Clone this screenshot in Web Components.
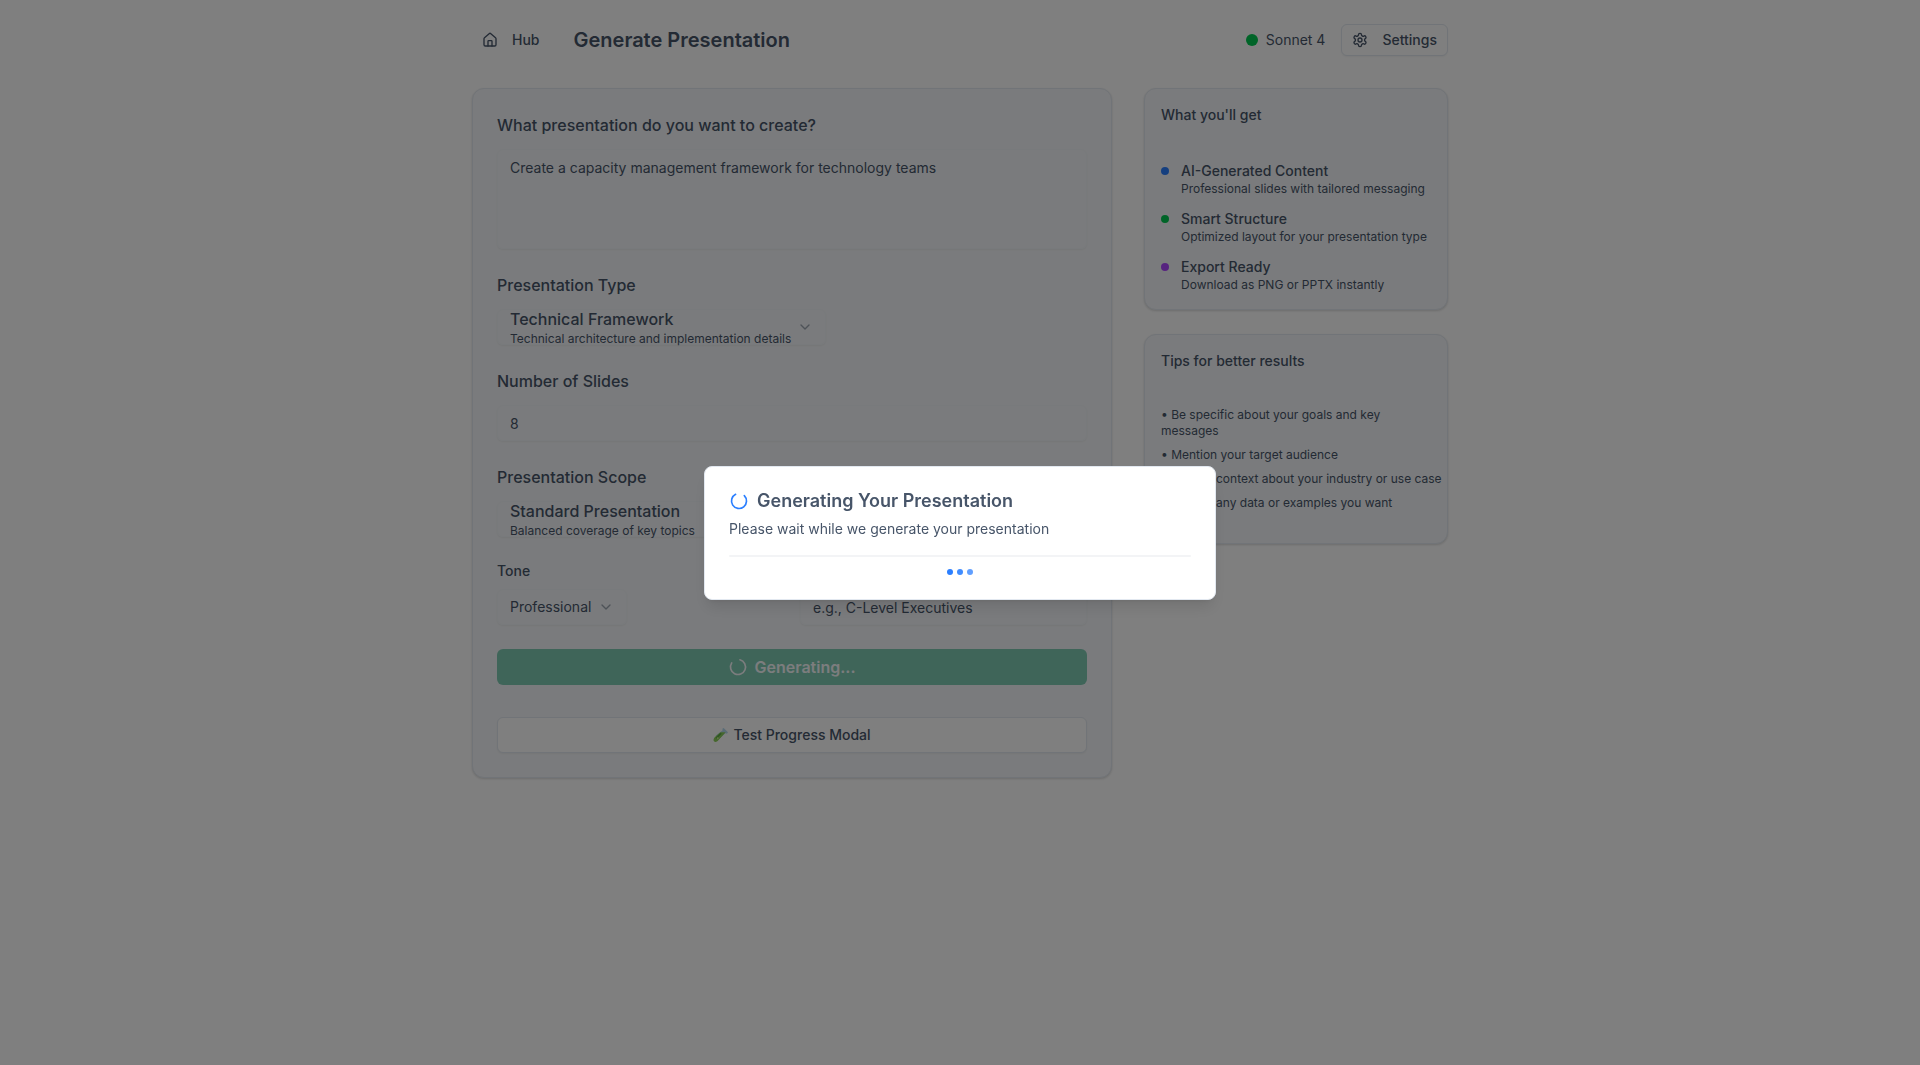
<!DOCTYPE html>
<html lang="en">
<head>
<meta charset="utf-8">
<title>Generate Presentation</title>
<style>
  html { --ink: #475569; --card: #f5f7fa; --line: #e2e8f0; }
  body { margin: 0; background: #fff; color: var(--ink); font: 14px/20px Inter, "Liberation Sans", sans-serif; }
</style>
</head>
<body>
<hub-page>
  <page-header slot="header"></page-header>
  <presentation-form slot="form"></presentation-form>
  <info-card slot="aside" heading="What you'll get">
    <feature-item color="#2b7fff" heading="AI-Generated Content">Professional slides with tailored messaging</feature-item>
    <feature-item color="#00c950" heading="Smart Structure">Optimized layout for your presentation type</feature-item>
    <feature-item color="#ad46ff" heading="Export Ready">Download as PNG or PPTX instantly</feature-item>
  </info-card>
  <info-card slot="aside" heading="Tips for better results" class="tips">
    <tip-item>Be specific about your goals and key messages</tip-item>
    <tip-item>Mention your target audience</tip-item>
    <tip-item class="line">Include context about your industry or use case</tip-item>
    <tip-item>Include any data or examples you want</tip-item>
  </info-card>
</hub-page>
<progress-modal heading="Generating Your Presentation">Please wait while we generate your presentation</progress-modal>

<script>
const ICONS = {
  home: '<path d="M3 10a2 2 0 0 1 .709-1.528l7-6a2 2 0 0 1 2.582 0l7 6A2 2 0 0 1 21 10v9a2 2 0 0 1-2 2H5a2 2 0 0 1-2-2z"/><path d="M15 21v-7a1 1 0 0 0-1-1h-4a1 1 0 0 0-1 1v7"/>',
  settings: '<path d="M12.22 2h-.44a2 2 0 0 0-2 2v.18a2 2 0 0 1-1 1.73l-.43.25a2 2 0 0 1-2 0l-.15-.08a2 2 0 0 0-2.73.73l-.22.38a2 2 0 0 0 .73 2.73l.15.1a2 2 0 0 1 1 1.72v.51a2 2 0 0 1-1 1.74l-.15.09a2 2 0 0 0-.73 2.73l.22.38a2 2 0 0 0 2.73.73l.15-.08a2 2 0 0 1 2 0l.43.25a2 2 0 0 1 1 1.73V20a2 2 0 0 0 2 2h.44a2 2 0 0 0 2-2v-.18a2 2 0 0 1 1-1.73l.43-.25a2 2 0 0 1 2 0l.15.08a2 2 0 0 0 2.73-.73l.22-.39a2 2 0 0 0-.73-2.73l-.15-.08a2 2 0 0 1-1-1.74v-.5a2 2 0 0 1 1-1.74l.15-.09a2 2 0 0 0 .73-2.73l-.22-.38a2 2 0 0 0-2.73-.73l-.15.08a2 2 0 0 1-2 0l-.43-.25a2 2 0 0 1-1-1.73V4a2 2 0 0 0-2-2z"/><circle cx="12" cy="12" r="3"/>',
  chevron: '<path d="m6 9 6 6 6-6"/>',
  loader: '<path transform="rotate(-45 12 12)" d="M21 12a9 9 0 1 1-6.219-8.56"/>',
  'loader-turned': '<path transform="rotate(-75 12 12)" d="M21 12a9 9 0 1 1-6.219-8.56"/>',
  tube: '<g stroke="none"><path fill="#b5d9ee" d="M14 2.500 16 1.500 22.500 8 21 10 18.500 9.500 8 19 4 13 14.500 5z"/><path fill="#8ccf5a" d="M11 8h8L8 20c-2 2.500-5 3-6.500 1.500S1 17 3 15z"/><path fill="#5aa845" d="m4 16 7-7 2 1-8 8z"/><circle cx="7" cy="17" r="1.500" fill="#c5ec8a"/></g>'
};

function define(name, html, setup) {
  const template = document.createElement('template');
  template.innerHTML = '<style>*{box-sizing:border-box}</style>' + html;
  customElements.define(name, class extends HTMLElement {
    constructor() {
      super();
      this.attachShadow({ mode: 'open' }).append(template.content.cloneNode(true));
    }
    connectedCallback() { if (setup) setup(this, this.shadowRoot); }
  });
}

define('ui-icon', `<style>
  :host { display: block; flex: none; width: var(--size, 16px); height: var(--size, 16px); }
  svg { display: block; width: 100%; height: 100%; fill: none; stroke: currentColor; stroke-width: 2; stroke-linecap: round; stroke-linejoin: round; }
</style><svg viewBox="0 0 24 24" aria-hidden="true"></svg>`,
(el, root) => { root.querySelector('svg').innerHTML = ICONS[el.getAttribute('name')]; });

define('hub-page', `<style>
  :host { display: block; max-width: 1024px; margin: 0 auto; padding: 24px; box-sizing: border-box; }
  main { display: grid; grid-template-columns: repeat(3, minmax(0, 1fr)); gap: 32px; align-items: start; margin-top: 32px; }
  .form { grid-column: span 2; }
  aside { display: flex; flex-direction: column; gap: 24px; }
</style>
<slot name="header"></slot>
<main><div class="form"><slot name="form"></slot></div><aside><slot name="aside"></slot></aside></main>`);

define('page-header', `<style>
  :host { display: flex; justify-content: space-between; align-items: center; }
  div { display: flex; align-items: center; gap: 24px; }
  .right { gap: 16px; }
  h1 { margin: 0; font-size: 20px; line-height: 28px; font-weight: 600; }
  button { display: flex; align-items: center; gap: 14px; height: 32px; padding: 0 10px; border: 0; border-radius: 6px; background: none; color: inherit; font: inherit; font-weight: 500; }
  .outline { border: 1px solid var(--line); box-shadow: 0 1px 2px rgba(0,0,0,.05); background: #fff; }
  .model { display: flex; align-items: center; gap: 8px; }
  .model i { width: 12px; height: 12px; border-radius: 50%; background: #00c950; }
</style>
<div><button type="button"><ui-icon name="home"></ui-icon>Hub</button><h1>Generate Presentation</h1></div>
<div class="right"><span class="model"><i></i>Sonnet 4</span>
<button type="button" class="outline"><ui-icon name="settings"></ui-icon>Settings</button></div>`);

define('rich-select', `<style>
  :host { display: block; }
  .box { display: inline-grid; grid-template-columns: auto 16px; grid-template-rows: 24px 16px; column-gap: 6px; align-content: center; vertical-align: top; height: 36px; padding: 0 12px; border: 1px solid #f1f5f9; border-radius: 6px; box-shadow: 0 1px 2px rgba(0,0,0,.05); }
  .single { grid-template-rows: 20px; }
  select { grid-column: 1; appearance: none; border: 0; padding: 0; margin: 0; background: none; color: inherit; font: inherit; font-size: 16px; line-height: 24px; font-weight: 500; height: 24px; width: 100%; }
  .single select { font-size: 14px; line-height: 20px; height: 20px; font-weight: 400; }
  .detail { grid-column: 1; grid-row: 2; font-size: 12px; line-height: 16px; white-space: nowrap; }
  .single .detail { display: none; }
  ui-icon { grid-column: 2; grid-row: 1 / -1; align-self: center; opacity: .5; }
</style>
<div class="box"><select><option></option></select><span class="detail"></span><ui-icon name="chevron"></ui-icon></div>`,
(el, root) => {
  root.querySelector('option').textContent = el.getAttribute('value');
  root.querySelector('select').setAttribute('aria-label', el.getAttribute('label'));
  const detail = el.getAttribute('detail');
  root.querySelector('.detail').textContent = detail || '';
  root.querySelector('.box').classList.toggle('single', !detail);
});

define('presentation-form', `<style>
  :host { display: block; }
  form { display: flex; flex-direction: column; gap: 24px; padding: 24px; border: 1px solid var(--line); border-radius: 12px; background: var(--card); box-shadow: 0 1px 3px rgba(0,0,0,.1), 0 1px 2px rgba(0,0,0,.06); }
  .field { display: flex; flex-direction: column; gap: 12px; }
  label, .label { font-size: 16px; line-height: 24px; font-weight: 500; }
  .pair { display: grid; grid-template-columns: 1fr 1fr; gap: 16px; }
  .pair .field { gap: 8px; }
  .pair label, .pair .label { font-size: 14px; line-height: 20px; }
  input, textarea { display: block; width: 100%; height: 36px; margin: 0; padding: 7px 12px; border: 1px solid #f1f5f9; border-radius: 6px; background: none; box-shadow: 0 1px 2px rgba(0,0,0,.05); color: inherit; font: inherit; resize: none; outline: 0; }
  textarea { height: 100px; padding: 8px 12px; }
  input::placeholder { color: inherit; opacity: 1; }
  .actions { display: flex; flex-direction: column; gap: 32px; }
  button { display: flex; align-items: center; justify-content: center; gap: 6px; height: 36px; border: 0; border-radius: 6px; color: inherit; font: inherit; font-weight: 500; }
  .primary { background: #7fcab3; color: #f8fafc; font-size: 16px; font-weight: 600; }
  .primary ui-icon { --size: 20px; }
  .outline { gap: 4px; background: #fff; border: 1px solid var(--line); box-shadow: 0 1px 2px rgba(0,0,0,.05); }
</style>
<form>
  <div class="field"><label for="topic">What presentation do you want to create?</label><textarea id="topic">Create a capacity management framework for technology teams</textarea></div>
  <div class="field"><span class="label">Presentation Type</span><rich-select label="Presentation Type" value="Technical Framework" detail="Technical architecture and implementation details"></rich-select></div>
  <div class="field"><label for="slides">Number of Slides</label><input id="slides" value="8"></div>
  <div class="field"><span class="label">Presentation Scope</span><rich-select label="Presentation Scope" value="Standard Presentation" detail="Balanced coverage of key topics"></rich-select></div>
  <div class="pair">
    <div class="field"><span class="label">Tone</span><rich-select label="Tone" value="Professional"></rich-select></div>
    <div class="field"><label for="audience">Audience</label><input id="audience" placeholder="e.g., C-Level Executives"></div>
  </div>
  <div class="actions">
    <button type="button" class="primary"><ui-icon name="loader-turned"></ui-icon>Generating...</button>
    <button type="button" class="outline"><ui-icon name="tube"></ui-icon>Test Progress Modal</button>
  </div>
</form>`);

define('info-card', `<style>
  :host { display: block; }
  section { padding: 16px; border: 1px solid var(--line); border-radius: 12px; background: var(--card); box-shadow: 0 1px 3px rgba(0,0,0,.1), 0 1px 2px rgba(0,0,0,.06); }
  :host(.tips) section { padding-bottom: 32px; }
  h2 { margin: 0 0 36px; font-size: 14px; line-height: 20px; font-weight: 500; }
  div { display: flex; flex-direction: column; gap: 12px; }
  :host(.tips) div { gap: 8px; }
</style><section><h2></h2><div><slot></slot></div></section>`,
(el, root) => { root.querySelector('h2').textContent = el.getAttribute('heading'); });

define('feature-item', `<style>
  :host { display: flex; gap: 12px; }
  i { flex: none; width: 8px; height: 8px; margin-top: 6px; border-radius: 50%; }
  h3 { margin: 0; font-size: 14px; line-height: 20px; font-weight: 500; }
  p { margin: 0; font-size: 12px; line-height: 16px; }
</style><i></i><div><h3></h3><p><slot></slot></p></div>`,
(el, root) => {
  root.querySelector('h3').textContent = el.getAttribute('heading');
  root.querySelector('i').style.background = el.getAttribute('color');
});

define('tip-item', `<style>
  :host { display: block; font-size: 12px; line-height: 16px; }
  :host(.line) { white-space: nowrap; }
</style>• <slot></slot>`);

define('progress-modal', `<style>
  :host { position: fixed; inset: 0; display: flex; align-items: center; justify-content: center; background: rgba(0,0,0,.5); }
  section { display: flex; flex-direction: column; width: 100%; max-width: 512px; padding: 24px; border: 1px solid var(--line); border-radius: 8px; background: #fff; box-shadow: 0 10px 15px -3px rgba(0,0,0,.1), 0 4px 6px -4px rgba(0,0,0,.1); }
  h2 { display: flex; align-items: center; gap: 8px; margin: 0 0 8px; font-size: 18px; line-height: 20px; font-weight: 600; }
  ui-icon { --size: 20px; color: #2b7fff; }
  p { margin: 0 0 16px; }
  .track { height: 2px; border-radius: 1px; background: #f3f4f6; }
  .dots { display: flex; justify-content: center; gap: 4px; margin-top: 12px; }
  .dots i { width: 6px; height: 6px; border-radius: 50%; background: #2b7fff; }
  .dots i:nth-child(2) { opacity: .9; }
  .dots i:nth-child(3) { opacity: .75; }
</style>
<section role="dialog" aria-modal="true"><h2><ui-icon name="loader"></ui-icon><span></span></h2><p><slot></slot></p>
<div class="track"></div><div class="dots"><i></i><i></i><i></i></div></section>`,
(el, root) => { root.querySelector('h2 span').textContent = el.getAttribute('heading'); });
</script>
</body>
</html>
